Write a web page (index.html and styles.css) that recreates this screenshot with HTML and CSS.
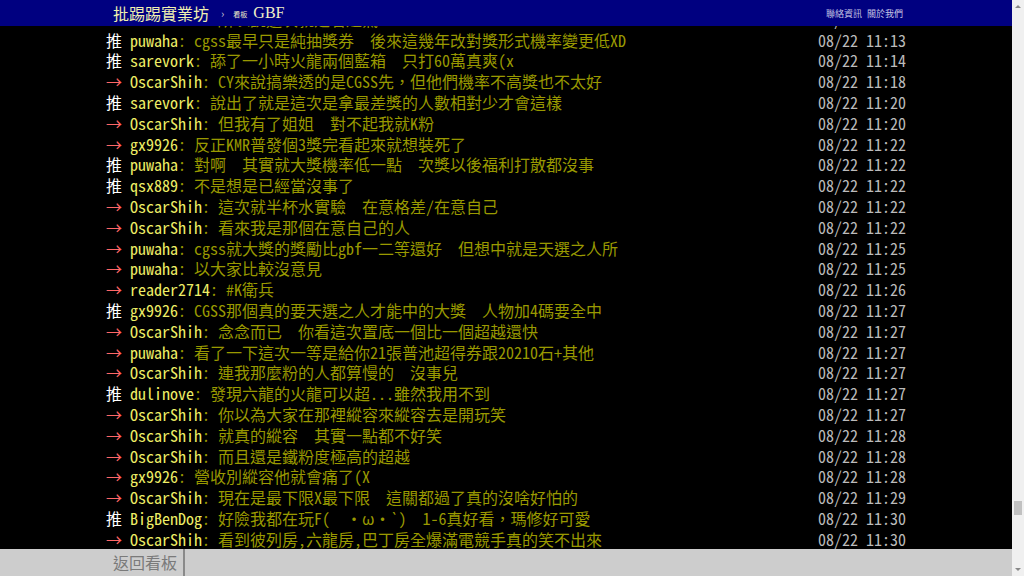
FILE: index.html
```html
<!DOCTYPE html>
<html lang="zh-TW">
<head>
  <meta charset="UTF-8" />
  <meta name="viewport" content="width=device-width, initial-scale=1" />
  <title>[閒聊] 批踢踢實業坊 › 看板 GBF</title>
  <link rel="stylesheet" href="styles.css">
</head>
<body>
  <div class="page">
    <div id="topbar">
      <a id="logo" href="#">批踢踢實業坊</a>
      <span class="sep">›</span>
      <a class="board" href="#"><span class="board-label">看板</span>GBF</a>
      <div class="right">
        <a href="#">聯絡資訊</a>
        <a href="#">關於我們</a>
      </div>
    </div>

    <div id="main-container">
      <div id="main-content" class="bbs-screen">
<div class="push"><span class="f1 hl push-tag">→ </span><span class="f3 hl push-userid">OscarShih</span><span class="f3 push-content">: 所以說這次就是看運氣</span><span class="push-ipdatetime"> 08/22 11:13</span></div>
<div class="push"><span class="hl push-tag">推 </span><span class="f3 hl push-userid">puwaha</span><span class="f3 push-content">: cgss最早只是純抽獎券　後來這幾年改對獎形式機率變更低XD</span><span class="push-ipdatetime"> 08/22 11:13</span></div>
<div class="push"><span class="hl push-tag">推 </span><span class="f3 hl push-userid">sarevork</span><span class="f3 push-content">: 舔了一小時火龍兩個藍箱　只打60萬真爽(x</span><span class="push-ipdatetime"> 08/22 11:14</span></div>
<div class="push"><span class="f1 hl push-tag">→ </span><span class="f3 hl push-userid">OscarShih</span><span class="f3 push-content">: CY來說搞樂透的是CGSS先，但他們機率不高獎也不太好</span><span class="push-ipdatetime"> 08/22 11:18</span></div>
<div class="push"><span class="hl push-tag">推 </span><span class="f3 hl push-userid">sarevork</span><span class="f3 push-content">: 說出了就是這次是拿最差獎的人數相對少才會這樣</span><span class="push-ipdatetime"> 08/22 11:20</span></div>
<div class="push"><span class="f1 hl push-tag">→ </span><span class="f3 hl push-userid">OscarShih</span><span class="f3 push-content">: 但我有了姐姐　對不起我就K粉</span><span class="push-ipdatetime"> 08/22 11:20</span></div>
<div class="push"><span class="f1 hl push-tag">→ </span><span class="f3 hl push-userid">gx9926</span><span class="f3 push-content">: 反正KMR普發個3獎完看起來就想裝死了</span><span class="push-ipdatetime"> 08/22 11:22</span></div>
<div class="push"><span class="hl push-tag">推 </span><span class="f3 hl push-userid">puwaha</span><span class="f3 push-content">: 對啊　其實就大獎機率低一點　次獎以後福利打散都沒事</span><span class="push-ipdatetime"> 08/22 11:22</span></div>
<div class="push"><span class="hl push-tag">推 </span><span class="f3 hl push-userid">qsx889</span><span class="f3 push-content">: 不是想是已經當沒事了</span><span class="push-ipdatetime"> 08/22 11:22</span></div>
<div class="push"><span class="f1 hl push-tag">→ </span><span class="f3 hl push-userid">OscarShih</span><span class="f3 push-content">: 這次就半杯水實驗　在意格差/在意自己</span><span class="push-ipdatetime"> 08/22 11:22</span></div>
<div class="push"><span class="f1 hl push-tag">→ </span><span class="f3 hl push-userid">OscarShih</span><span class="f3 push-content">: 看來我是那個在意自己的人</span><span class="push-ipdatetime"> 08/22 11:22</span></div>
<div class="push"><span class="f1 hl push-tag">→ </span><span class="f3 hl push-userid">puwaha</span><span class="f3 push-content">: cgss就大獎的獎勵比gbf一二等還好　但想中就是天選之人所</span><span class="push-ipdatetime"> 08/22 11:25</span></div>
<div class="push"><span class="f1 hl push-tag">→ </span><span class="f3 hl push-userid">puwaha</span><span class="f3 push-content">: 以大家比較沒意見</span><span class="push-ipdatetime"> 08/22 11:25</span></div>
<div class="push"><span class="f1 hl push-tag">→ </span><span class="f3 hl push-userid">reader2714</span><span class="f3 push-content">: #K衛兵</span><span class="push-ipdatetime"> 08/22 11:26</span></div>
<div class="push"><span class="hl push-tag">推 </span><span class="f3 hl push-userid">gx9926</span><span class="f3 push-content">: CGSS那個真的要天選之人才能中的大獎　人物加4碼要全中</span><span class="push-ipdatetime"> 08/22 11:27</span></div>
<div class="push"><span class="f1 hl push-tag">→ </span><span class="f3 hl push-userid">OscarShih</span><span class="f3 push-content">: 念念而已　你看這次置底一個比一個超越還快</span><span class="push-ipdatetime"> 08/22 11:27</span></div>
<div class="push"><span class="f1 hl push-tag">→ </span><span class="f3 hl push-userid">puwaha</span><span class="f3 push-content">: 看了一下這次一等是給你21張普池超得券跟20210石+其他</span><span class="push-ipdatetime"> 08/22 11:27</span></div>
<div class="push"><span class="f1 hl push-tag">→ </span><span class="f3 hl push-userid">OscarShih</span><span class="f3 push-content">: 連我那麼粉的人都算慢的　沒事兒</span><span class="push-ipdatetime"> 08/22 11:27</span></div>
<div class="push"><span class="hl push-tag">推 </span><span class="f3 hl push-userid">dulinove</span><span class="f3 push-content">: 發現六龍的火龍可以超...雖然我用不到</span><span class="push-ipdatetime"> 08/22 11:27</span></div>
<div class="push"><span class="f1 hl push-tag">→ </span><span class="f3 hl push-userid">OscarShih</span><span class="f3 push-content">: 你以為大家在那裡縱容來縱容去是開玩笑</span><span class="push-ipdatetime"> 08/22 11:27</span></div>
<div class="push"><span class="f1 hl push-tag">→ </span><span class="f3 hl push-userid">OscarShih</span><span class="f3 push-content">: 就真的縱容　其實一點都不好笑</span><span class="push-ipdatetime"> 08/22 11:28</span></div>
<div class="push"><span class="f1 hl push-tag">→ </span><span class="f3 hl push-userid">OscarShih</span><span class="f3 push-content">: 而且還是鐵粉度極高的超越</span><span class="push-ipdatetime"> 08/22 11:28</span></div>
<div class="push"><span class="f1 hl push-tag">→ </span><span class="f3 hl push-userid">gx9926</span><span class="f3 push-content">: 營收別縱容他就會痛了(X</span><span class="push-ipdatetime"> 08/22 11:28</span></div>
<div class="push"><span class="f1 hl push-tag">→ </span><span class="f3 hl push-userid">OscarShih</span><span class="f3 push-content">: 現在是最下限X最下限　這關都過了真的沒啥好怕的</span><span class="push-ipdatetime"> 08/22 11:29</span></div>
<div class="push"><span class="hl push-tag">推 </span><span class="f3 hl push-userid">BigBenDog</span><span class="f3 push-content">: 好險我都在玩F(　・ω・`)　1-6真好看，瑪修好可愛</span><span class="push-ipdatetime"> 08/22 11:30</span></div>
<div class="push"><span class="f1 hl push-tag">→ </span><span class="f3 hl push-userid">OscarShih</span><span class="f3 push-content">: 看到彼列房,六龍房,巴丁房全爆滿電競手真的笑不出來</span><span class="push-ipdatetime"> 08/22 11:30</span></div>
<div class="push"><span class="hl push-tag">推 </span><span class="f3 hl push-userid">puwaha</span><span class="f3 push-content">: 電競手真的辛苦了</span><span class="push-ipdatetime"> 08/22 11:31</span></div>
      </div>
    </div>

    <div id="navigation-container">
      <div id="navigation">
        <a class="board" href="#">返回看板</a>
        <div class="bar"></div>
      </div>
    </div>
  </div>

  <div class="scrollbar">
    <span class="arrow up"></span>
    <div class="track"><div class="thumb"></div></div>
    <span class="arrow down"></span>
  </div>
</body>
</html>
```

FILE: styles.css
```css
html, body {
  margin: 0;
  padding: 0;
  height: 100%;
  overflow: hidden;
}

body {
  display: flex;
  background: #000;
  color: #ccc;
  font-family: "Noto Sans Mono CJK TC", "Noto Sans CJK TC", monospace;
}

a {
  text-decoration: none;
}

.page {
  flex: 1;
  display: flex;
  flex-direction: column;
  min-width: 0;
}

/* top bar */
#topbar {
  height: 26px;
  flex: none;
  display: flex;
  align-items: center;
  padding: 0 109px 0 113px;
  background: #000080;
}

#logo {
  color: #f0f0b0;
  font-size: 16px;
  font-family: "Noto Sans CJK TC", sans-serif;
}

#topbar .sep {
  color: #c8c8d8;
  font-size: 11px;
  margin: 0 9px 0 12px;
}

#topbar .board {
  color: #f0f0c8;
  font-family: "Liberation Serif", serif;
  font-size: 16px;
}

#topbar .board-label {
  font-family: "Noto Sans CJK TC", sans-serif;
  font-size: 7px;
  vertical-align: 1px;
  margin-right: 6px;
}

#topbar .right {
  margin-left: auto;
  display: flex;
  gap: 5px;
}

#topbar .right a {
  color: #c4c4e4;
  font-family: "Noto Sans CJK TC", sans-serif;
  font-size: 9px;
}

/* pushes */
#main-container {
  flex: 1;
  overflow: hidden;
}

.bbs-screen {
  width: 800px;
  margin: -17.2px auto 0;
  font-size: 16px;
  line-height: 20.8px;
}

.push {
  white-space: pre;
}

.push-tag { color: #fff; }
.push-tag.f1 { color: #f66; }
.push-userid { color: #eeee66; }
.push-content { color: #990; }

.push-ipdatetime {
  float: right;
  color: #bbb;
}

/* bottom bar */
#navigation-container {
  height: 27px;
  flex: none;
  background: #cdcdcd;
}

#navigation {
  display: flex;
  height: 100%;
}

#navigation .board {
  padding: 0 6px 0 113px;
  line-height: 27px;
  color: #7a7a7a;
  font-family: "Noto Sans CJK TC", sans-serif;
  font-size: 16px;
  border-right: 2px solid #8a8a8a;
}

/* scrollbar */
.scrollbar {
  width: 12px;
  flex: none;
  display: flex;
  flex-direction: column;
  align-items: center;
  background: #f0f0f0;
}

.arrow {
  width: 0;
  height: 0;
  border-left: 3px solid transparent;
  border-right: 3px solid transparent;
  margin: 5px 0;
}

.arrow.up { border-bottom: 3px solid #888; }
.arrow.down { border-top: 3px solid #888; }

.track {
  flex: 1;
  width: 100%;
  display: flex;
  flex-direction: column;
  justify-content: flex-end;
  align-items: center;
  padding-bottom: 48px;
}

.thumb {
  width: 8px;
  height: 14px;
  background: #c1c1c1;
}
```
